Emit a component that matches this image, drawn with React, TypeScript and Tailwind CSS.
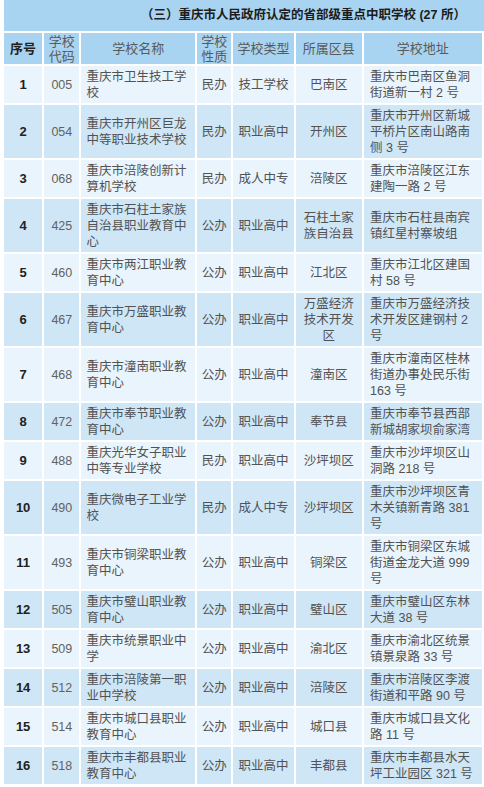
import React from "react";

type School = {
  no: string;
  code: string;
  name: string[];
  nature: string;
  type: string;
  district: string[];
  address: string[];
};

const schools: School[] = [
  { no: "1", code: "005", name: ["重庆市卫生技工学", "校"], nature: "民办", type: "技工学校", district: ["巴南区"], address: ["重庆市巴南区鱼洞", "街道新一村 2 号"] },
  { no: "2", code: "054", name: ["重庆市开州区巨龙", "中等职业技术学校"], nature: "民办", type: "职业高中", district: ["开州区"], address: ["重庆市开州区新城", "平桥片区南山路南", "侧 3 号"] },
  { no: "3", code: "068", name: ["重庆市涪陵创新计", "算机学校"], nature: "民办", type: "成人中专", district: ["涪陵区"], address: ["重庆市涪陵区江东", "建陶一路 2 号"] },
  { no: "4", code: "425", name: ["重庆市石柱土家族", "自治县职业教育中", "心"], nature: "公办", type: "职业高中", district: ["石柱土家", "族自治县"], address: ["重庆市石柱县南宾", "镇红星村寨坡组"] },
  { no: "5", code: "460", name: ["重庆市两江职业教", "育中心"], nature: "公办", type: "职业高中", district: ["江北区"], address: ["重庆市江北区建国", "村 58 号"] },
  { no: "6", code: "467", name: ["重庆市万盛职业教", "育中心"], nature: "公办", type: "职业高中", district: ["万盛经济", "技术开发", "区"], address: ["重庆市万盛经济技", "术开发区建钢村 2", "号"] },
  { no: "7", code: "468", name: ["重庆市潼南职业教", "育中心"], nature: "公办", type: "职业高中", district: ["潼南区"], address: ["重庆市潼南区桂林", "街道办事处民乐街", "163 号"] },
  { no: "8", code: "472", name: ["重庆市奉节职业教", "育中心"], nature: "公办", type: "职业高中", district: ["奉节县"], address: ["重庆市奉节县西部", "新城胡家坝俞家湾"] },
  { no: "9", code: "488", name: ["重庆光华女子职业", "中等专业学校"], nature: "民办", type: "职业高中", district: ["沙坪坝区"], address: ["重庆市沙坪坝区山", "洞路 218 号"] },
  { no: "10", code: "490", name: ["重庆微电子工业学", "校"], nature: "民办", type: "成人中专", district: ["沙坪坝区"], address: ["重庆市沙坪坝区青", "木关镇新青路 381", "号"] },
  { no: "11", code: "493", name: ["重庆市铜梁职业教", "育中心"], nature: "公办", type: "职业高中", district: ["铜梁区"], address: ["重庆市铜梁区东城", "街道金龙大道 999", "号"] },
  { no: "12", code: "505", name: ["重庆市璧山职业教", "育中心"], nature: "公办", type: "职业高中", district: ["璧山区"], address: ["重庆市璧山区东林", "大道 38 号"] },
  { no: "13", code: "509", name: ["重庆市统景职业中", "学"], nature: "公办", type: "职业高中", district: ["渝北区"], address: ["重庆市渝北区统景", "镇景泉路 33 号"] },
  { no: "14", code: "512", name: ["重庆市涪陵第一职", "业中学校"], nature: "公办", type: "职业高中", district: ["涪陵区"], address: ["重庆市涪陵区李渡", "街道和平路 90 号"] },
  { no: "15", code: "514", name: ["重庆市城口县职业", "教育中心"], nature: "公办", type: "职业高中", district: ["城口县"], address: ["重庆市城口县文化", "路 11 号"] },
  { no: "16", code: "518", name: ["重庆市丰都县职业", "教育中心"], nature: "公办", type: "职业高中", district: ["丰都县"], address: ["重庆市丰都县水天", "坪工业园区 321 号"] },
];

function Lines({ lines }: { lines: string[] }) {
  return (
    <>
      {lines.map((l, i) => (
        <div key={i} className="whitespace-nowrap">
          {l}
        </div>
      ))}
    </>
  );
}

export default function App() {
  return (
    <div
      className="w-[484px] h-[787px] overflow-hidden bg-white"
      style={{ fontFamily: '"Liberation Sans", "Noto Sans CJK SC", sans-serif' }}
    >
      <div className="ml-[4px] w-[520px] h-[31px] bg-[#a9d4f1] flex items-center justify-end pr-[58px] text-[12.5px] font-bold text-[#1c1c1c]">
        （三）重庆市人民政府认定的省部级重点中职学校 (27 所）
      </div>
      <table className="ml-[2px] table-fixed border-separate border-spacing-[2px] w-[524px] text-[12.5px] leading-[16px] text-[#525252]">
        <colgroup>
          <col className="w-[38px]" />
          <col className="w-[35px]" />
          <col className="w-[113px]" />
          <col className="w-[34px]" />
          <col className="w-[60px]" />
          <col className="w-[66px]" />
          <col className="w-[117px]" />
          <col className="w-[40px]" />
        </colgroup>
        <thead>
          <tr className="bg-[#a9d4f1] h-[31px] text-[#5a5a5a] text-[13px]">
            <th className="font-bold text-[#222]">序号</th>
            <th className="font-normal leading-[15px]">学校<br />代码</th>
            <th className="font-normal">学校名称</th>
            <th className="font-normal leading-[15px]">学校<br />性质</th>
            <th className="font-normal">学校类型</th>
            <th className="font-normal">所属区县</th>
            <th className="font-normal">学校地址</th>
            <th />
          </tr>
        </thead>
        <tbody>
          {schools.map((s, i) => (
            <tr key={s.no} className={i % 2 === 0 ? "bg-[#e9f4fc]" : "bg-[#cfe6f7]"}>
              <td className="text-center font-bold text-[#222] text-[13px] pt-[3px] pb-[2px]">{s.no}</td>
              <td className="text-center text-[#626262]">{s.code}</td>
              <td className="pl-[5px] pt-[3px] pb-[2px]">
                <Lines lines={s.name} />
              </td>
              <td className="text-center">{s.nature}</td>
              <td className="text-center">{s.type}</td>
              <td className="text-center">
                <Lines lines={s.district} />
              </td>
              <td className="pl-[6px] pt-[3px] pb-[2px]">
                <Lines lines={s.address} />
              </td>
              <td />
            </tr>
          ))}
        </tbody>
      </table>
    </div>
  );
}
